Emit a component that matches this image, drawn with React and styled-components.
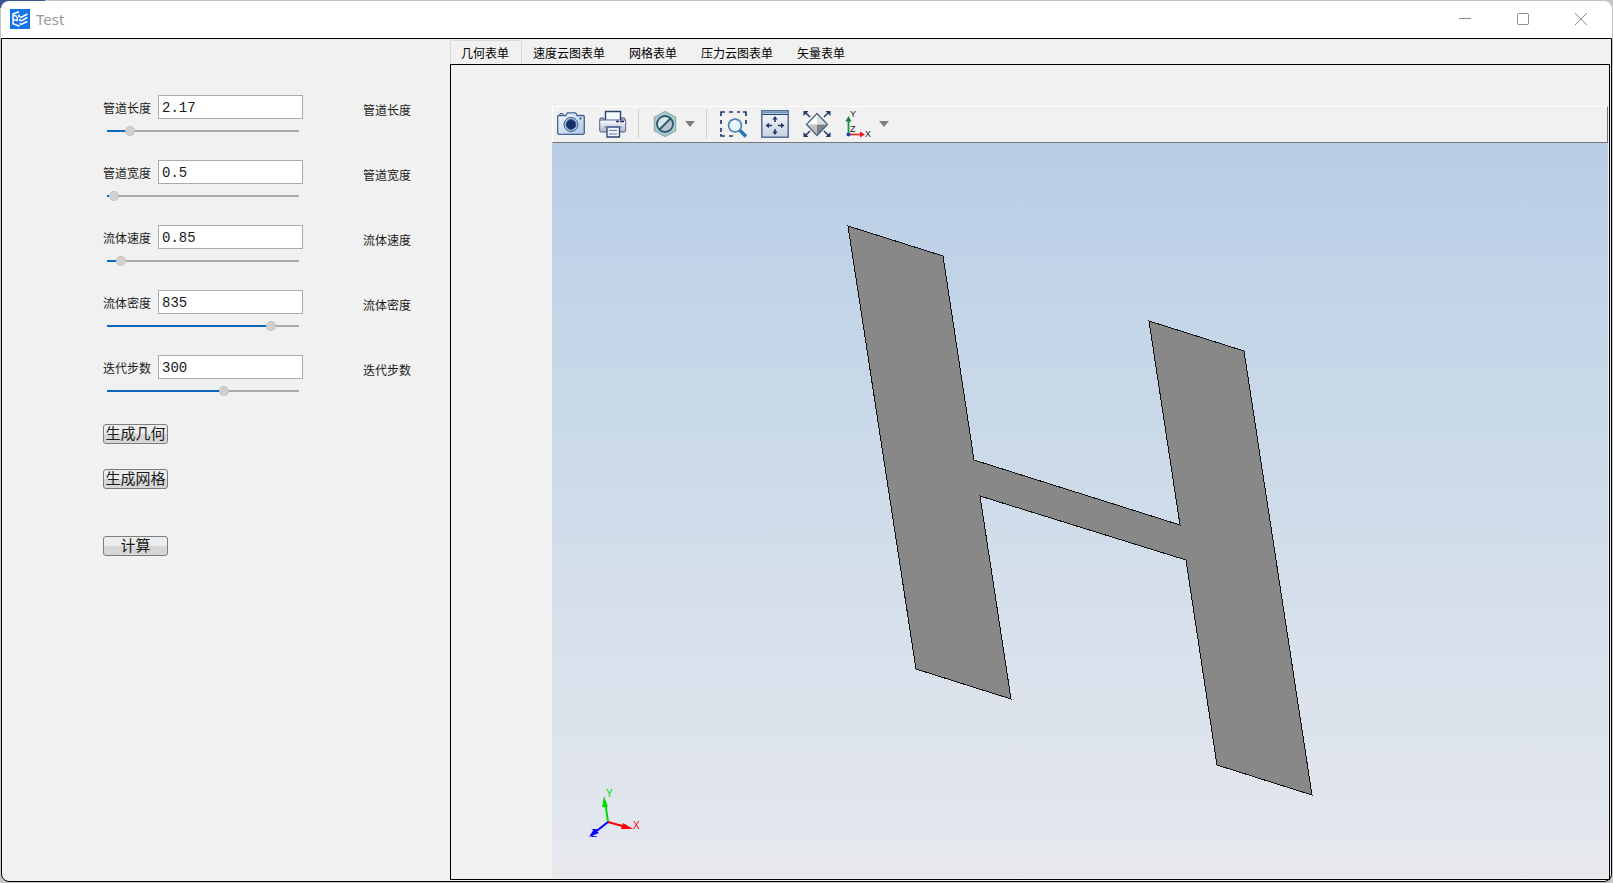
import { useState } from 'react';
import styled, { createGlobalStyle, css } from 'styled-components';

const GlobalStyle = createGlobalStyle`
  * {
    box-sizing: border-box;
  }

  body {
    margin: 0;
    background: linear-gradient(90deg, #3b5793 45px, #c4c4c4 45px) 0 0 / 100% 8px no-repeat, #c6c6c8;
    color: #1a1a1a;
    font-family: 'Liberation Sans', 'Noto Sans CJK SC', sans-serif;
    font-size: 12px;
  }

  button,
  input {
    margin: 0;
    color: inherit;
    font: inherit;
  }
`;

const Window = styled.div`
  display: flex;
  flex-direction: column;
  height: 100vh;
  padding: 1px;
`;

const TitleBar = styled.header`
  display: flex;
  align-items: center;
  height: 37px;
  padding: 0 2px 2px 9px;
  background: #fff;
  border-radius: 8px 8px 0 0;
`;

const Title = styled.h1`
  flex: 1;
  margin: 0 0 0 6px;
  color: #999;
  font-family: 'Noto Sans', sans-serif;
  font-size: 15px;
  font-weight: 400;
`;

const WindowButton = styled.button`
  display: flex;
  align-items: center;
  justify-content: center;
  width: 58px;
  height: 35px;
  padding: 0;
  background: none;
  border: 0;
`;

const Body = styled.div`
  display: flex;
  flex: 1;
  min-height: 0;
  background: #f1f1f1;
  border: 1px solid #000;
  border-radius: 0 0 8px 8px;
`;

const Sidebar = styled.form`
  flex: none;
  width: 448px;
  padding: 56px 0 0 101px;
`;

const Param = styled.div`
  display: flex;
  gap: 60px;
  height: 44px;
  margin-bottom: 21px;
`;

const Controls = styled.div`
  display: flex;
  flex-direction: column;
  gap: 4px;
  width: 200px;
`;

const Field = styled.label`
  display: flex;
  align-items: center;
  justify-content: space-between;
  white-space: nowrap;
`;

const ValueInput = styled.input`
  width: 145px;
  height: 24px;
  padding: 2px 3px 0;
  background: #fff;
  border: 1px solid #ababab;
  font-family: 'Liberation Mono', monospace;
  font-size: 14px;
`;

const track = css`
  height: 2px;
  background: linear-gradient(90deg, #0f67b8 var(--fill), #ababab var(--fill));
`;

const thumb = css`
  width: 10px;
  height: 10px;
  background: #d0d0d0;
  border: 1px dotted #b4b4b4;
  border-radius: 50%;
`;

const Slider = styled.input`
  appearance: none;
  height: 16px;
  margin: 0 4px;
  background: none;

  &::-webkit-slider-runnable-track {
    ${track}
  }

  &::-webkit-slider-thumb {
    appearance: none;
    margin-top: -4px;
    ${thumb}
  }

  &::-moz-range-track {
    ${track}
  }

  &::-moz-range-thumb {
    ${thumb}
  }
`;

const Note = styled.span`
  line-height: 33px;
`;

const Actions = styled.div`
  display: flex;
  flex-direction: column;
  align-items: flex-start;
  gap: 25px;
  padding-top: 4px;
`;

const ActionButton = styled.button`
  width: 65px;
  height: 20px;
  margin-top: ${(props) => (props.$apart ? '22px' : '0')};
  padding: 0;
  background: linear-gradient(#ededed 50%, #d6d6d6 50%);
  border: 1px solid #7c7c7c;
  border-radius: 3px;
  font-size: 15px;
  line-height: 18px;
  white-space: nowrap;
`;

const Main = styled.main`
  display: flex;
  flex: 1;
  flex-direction: column;
  min-width: 0;
  padding: 1px 1px 1px 0;
`;

const TabList = styled.div`
  display: flex;
  height: 24px;
`;

const Tab = styled.button`
  height: 25px;
  padding: 0 12px 0 10px;
  background: ${(props) => (props.$active ? '#f1f1f1' : 'none')};
  border: 1px solid ${(props) => (props.$active ? '#d9d9d9' : 'transparent')};
  color: #000;
  white-space: nowrap;
`;

const Panel = styled.section`
  display: flex;
  flex: 1;
  flex-direction: column;
  min-height: 0;
  padding: 41px 1px 1px 101px;
  border: 1px solid #000;
`;

const Toolbar = styled.div`
  display: flex;
  align-items: center;
  height: 37px;
  padding: 0 0 2px 4px;
  border: 1px solid;
  border-color: #fff #777 #777 #fff;
`;

const ToolGroup = styled.div`
  display: flex;
  gap: 14px;
`;

const ToolButton = styled.button`
  display: flex;
  align-items: center;
  gap: 6px;
  padding: 0;
  background: none;
  border: 0;
`;

const Separator = styled.div`
  width: 1px;
  height: 29px;
  margin: 0 12px 0 11px;
  background: #cfcfcf;
`;

const Arrow = styled.span`
  border: 5px solid transparent;
  border-top: 6px solid #808080;
  border-bottom: 0;
`;

const Canvas = styled.div`
  flex: 1;
  min-height: 0;
  background: linear-gradient(#b8cde6, #c3d5e8 22%, #cfdce9 50%, #d9e1ec 70%, #e2e6ed 92%, #e8e9ed);
`;

const Scene = styled.svg`
  display: block;
  width: 100%;
  height: 100%;
`;

const params = [
  { id: 'length', label: '管道长度', value: '2.17', position: 10 },
  { id: 'width', label: '管道宽度', value: '0.5', position: 1 },
  { id: 'speed', label: '流体速度', value: '0.85', position: 5 },
  { id: 'density', label: '流体密度', value: '835', position: 87.5 },
  { id: 'steps', label: '迭代步数', value: '300', position: 61.5 }
];

const tabs = ['几何表单', '速度云图表单', '网格表单', '压力云图表单', '矢量表单'];

const AppLogo = () => (
  <svg width="20" height="20" viewBox="0 0 20 20">
    <rect width="20" height="20" fill="#1473e6" />
    <g fill="none" stroke="#fff" strokeWidth="1.5">
      <path d="M2.5 5.2 9 2.8M3 5v9.8l6.500 2.400M3.2 6.200l4 1.200M3.5 10.5l3.600 1.100M7.300 8v4" />
      <path d="M9 5.500v2l2 1 6.500-3.500M9 10.500l2 1.300 6.500-3.300M9.500 14.500l1.700 1 6-3" />
    </g>
  </svg>
);

const Icon = ({ children }) => (
  <svg width="28" height="28" viewBox="0 0 28 28" fill="none">
    {children}
  </svg>
);

const CameraIcon = () => (
  <Icon>
    <defs>
      <linearGradient id="camera" x1="0" y1="0" x2="1" y2="1">
        <stop offset="0" stopColor="#f4f9ff" />
        <stop offset="1" stopColor="#a9c9ea" />
      </linearGradient>
    </defs>
    <path
      d="M2 5.5h7l1.3-2.7h8.4L20 5.5h6q1.3 0 1.3 1.3v16q0 1.5-1.3 1.5H2q-1.3 0-1.3-1.5v-16Q.7 5.5 2 5.5z"
      fill="url(#camera)"
      stroke="#46618c"
      strokeWidth="1.3"
    />
    <path d="M3 5V3.5h3V5" stroke="#46618c" />
    <circle cx="14" cy="14.5" r="7" fill="#b9cce2" stroke="#3c5a86" />
    <circle cx="14" cy="14.5" r="5" fill="#132f63" stroke="#3b6292" />
    <circle cx="23.5" cy="8.5" r="1" fill="#1d3768" />
  </Icon>
);

const PrinterIcon = () => (
  <Icon>
    <defs>
      <linearGradient id="printer" x1="0" y1="0" x2="0" y2="1">
        <stop offset="0" stopColor="#fff" />
        <stop offset="1" stopColor="#aab4cd" />
      </linearGradient>
    </defs>
    <rect x="1" y="8" width="4" height="5" rx="1" fill="#e4e8f0" stroke="#2b3f70" />
    <rect x="22" y="8" width="4" height="5" rx="1" fill="#e4e8f0" stroke="#2b3f70" />
    <path d="M6.5 1.5h15V11h-15z" fill="#f5f8fd" stroke="#2b3f70" strokeWidth="1.4" />
    <rect x=".7" y="10" width="26" height="12" rx="1.5" fill="url(#printer)" stroke="#52638c" />
    <path d="M17 11.5h3m1 0h4" stroke="#1d2f60" strokeWidth="1.4" />
    <path d="M8 17h12.5v10H8z" fill="#eef3fb" stroke="#2b3f70" strokeWidth="1.3" />
    <path d="M5 17h18M10 20.5h8m-8 3.5h8" stroke="#6c80a8" strokeWidth="1.2" />
  </Icon>
);

const SectionIcon = () => (
  <Icon>
    <path d="M14 1.5 24.5 7.5v13L14 26.5 3.5 20.5v-13z" fill="#b5cdd0" stroke="#8eacb0" strokeWidth="1.4" />
    <circle cx="14" cy="14" r="8" fill="#dce5ea" />
    <path d="M20 8.5A8 8 0 0 1 8.5 20z" fill="#bcc3cc" />
    <circle cx="14" cy="14" r="8" stroke="#205b70" strokeWidth="1.8" />
    <path d="M8.5 19.5l11-11" stroke="#205b70" strokeWidth="1.8" />
  </Icon>
);

const ZoomAreaIcon = () => (
  <Icon>
    <path
      d="M2 6V2h4m4 0h4m4 0h3m3 0h3v4m0 4v4M2 10v4m0 4v4m0 2v2h4m4 0h4"
      stroke="#243b6c"
      strokeWidth="1.7"
    />
    <path d="M20.5 20l6.5 6.5" stroke="#2874b6" strokeWidth="3.6" />
    <circle cx="16" cy="15.5" r="6.4" fill="#e9f5fc" stroke="#4d86ae" strokeWidth="1.7" />
    <path d="M12 14.5q1.3-3 4.5-3" stroke="#fff" strokeWidth="1.6" />
  </Icon>
);

const FitWindowIcon = () => (
  <Icon>
    <defs>
      <linearGradient id="fit" x1="0" y1="0" x2="0" y2="1">
        <stop offset="0" stopColor="#f7f9fd" />
        <stop offset="1" stopColor="#c8d1e2" />
      </linearGradient>
    </defs>
    <rect x=".8" y=".8" width="26.4" height="26.4" fill="url(#fit)" stroke="#4b628c" strokeWidth="1.4" />
    <path d="M1.5 2.5h25" stroke="#6f96c2" strokeWidth="2" />
    <path d="M1 4.5h26" stroke="#2e4877" />
    <path d="M14 8v4M14 19v4M7 15.5h4m6 0h4" stroke="#203967" strokeWidth="1.6" />
    <path d="M14 6l2.7 3.500h-5.400zM14 25l2.700-3.500h-5.400zM4.500 15.500l3.500-2.700v5.400zM23.500 15.500l-3.500-2.700v5.400z" fill="#203967" />
  </Icon>
);

const FitAllIcon = () => (
  <Icon>
    <path d="M14 3.5 3.5 14.5H14z" fill="#fff" />
    <path d="M14 3.5 24.5 14.5H14z" fill="#dcdfe0" />
    <path d="M3.5 14.5H14v11z" fill="#bec2c5" />
    <path d="M24.5 14.5H14v11z" fill="#7d8387" />
    <path d="M14 3.5 24.5 14.5 14 25.5 3.5 14.5z" stroke="#4d6485" strokeWidth="1.3" />
    <path d="M2 2l5 5M26 2l-5 5M2 26l5-5m19 5l-5-5" stroke="#203967" strokeWidth="1.5" />
    <path d="M.5 1h5L.5 6zM27.5 1h-5l5 5zM.5 27h5l-5-5zM27.5 27h-5l5-5z" fill="#203967" />
  </Icon>
);

const AxesIcon = () => (
  <Icon>
    <path d="M3.5 24.5V10" stroke="#249044" strokeWidth="1.8" />
    <path d="M3.5 6l3 5.5h-6z" fill="#168238" />
    <path d="M4 24.5h12" stroke="#e33a2c" strokeWidth="1.8" />
    <path d="M20 24.5l-5-3v6z" fill="#e3211a" />
    <circle cx="3.5" cy="24.5" r="2" fill="#2144ae" />
    <g fill="#222" fontFamily="Liberation Sans, sans-serif" fontSize="9">
      <text x="5" y="7">Y</text>
      <text x="5" y="22">Z</text>
      <text x="20" y="27">X</text>
    </g>
  </Icon>
);

function ParamRow({ param }) {
  const [value, setValue] = useState(param.value);
  const [position, setPosition] = useState(param.position);

  return (
    <Param>
      <Controls>
        <Field>
          {param.label}
          <ValueInput name={param.id} value={value} onChange={(e) => setValue(e.target.value)} />
        </Field>
        <Slider
          type="range"
          step="any"
          aria-label={param.label}
          value={position}
          onChange={(e) => setPosition(e.target.value)}
          style={{ '--fill': `${position}%` }}
        />
      </Controls>
      <Note>{param.label}</Note>
    </Param>
  );
}

function GeometryView() {
  return (
    <Canvas>
      <Scene viewBox="0 0 1056 735">
        <path
          d="M296 83 391 113 422 317 628 382 597 178 692 208 760 652 665 622 634 417 428 353 459 556 364 526z"
          fill="#888"
          stroke="#111"
          shapeRendering="crispEdges"
        />
        {/* orientation triad */}
        <g fill="none" strokeWidth="2">
          <path d="M56 679 53 658" stroke="#0d0" />
          <path d="M56 679 74 684" stroke="#f00" />
          <path d="M56 679 42 690" stroke="#00f" />
        </g>
        <path d="M52 653 56 664 50 664z" fill="#0d0" />
        <path d="M81 686 69 686 71 680z" fill="#f00" />
        <path d="M37 694 42 686 47 690z" fill="#00f" />
        <g fontFamily="Liberation Sans, sans-serif" fontSize="10">
          <text x="54" y="654" fill="#0d0">Y</text>
          <text x="81" y="686" fill="#f00">X</text>
          <text x="39" y="694" fill="#00f">Z</text>
        </g>
      </Scene>
    </Canvas>
  );
}

export default function App() {
  const [activeTab, setActiveTab] = useState(tabs[0]);

  return (
    <Window>
      <GlobalStyle />
      <TitleBar>
        <AppLogo />
        <Title>Test</Title>
        <WindowButton aria-label="最小化">
          <svg width="12" height="12" stroke="#8c8c8c">
            <path d="M0 5.5h12" />
          </svg>
        </WindowButton>
        <WindowButton aria-label="最大化">
          <svg width="12" height="12" fill="none" stroke="#8c8c8c">
            <rect x=".5" y=".5" width="11" height="11" rx="1" />
          </svg>
        </WindowButton>
        <WindowButton aria-label="关闭">
          <svg width="12" height="12" stroke="#8c8c8c">
            <path d="M0 0l12 12M12 0L0 12" />
          </svg>
        </WindowButton>
      </TitleBar>
      <Body>
        <Sidebar onSubmit={(e) => e.preventDefault()}>
          {params.map((param) => (
            <ParamRow key={param.id} param={param} />
          ))}
          <Actions>
            <ActionButton type="button">生成几何</ActionButton>
            <ActionButton type="button">生成网格</ActionButton>
            <ActionButton $apart>计算</ActionButton>
          </Actions>
        </Sidebar>
        <Main>
          <TabList role="tablist">
            {tabs.map((tab) => (
              <Tab
                key={tab}
                role="tab"
                aria-selected={tab === activeTab}
                $active={tab === activeTab}
                onClick={() => setActiveTab(tab)}
              >
                {tab}
              </Tab>
            ))}
          </TabList>
          <Panel role="tabpanel" aria-label={activeTab}>
            <Toolbar role="toolbar">
              <ToolGroup>
                <ToolButton aria-label="截图">
                  <CameraIcon />
                </ToolButton>
                <ToolButton aria-label="打印">
                  <PrinterIcon />
                </ToolButton>
              </ToolGroup>
              <Separator />
              <ToolButton aria-label="剖切">
                <SectionIcon />
                <Arrow />
              </ToolButton>
              <Separator />
              <ToolGroup>
                <ToolButton aria-label="框选缩放">
                  <ZoomAreaIcon />
                </ToolButton>
                <ToolButton aria-label="适应窗口">
                  <FitWindowIcon />
                </ToolButton>
                <ToolButton aria-label="显示全部">
                  <FitAllIcon />
                </ToolButton>
                <ToolButton aria-label="视图方向">
                  <AxesIcon />
                  <Arrow />
                </ToolButton>
              </ToolGroup>
            </Toolbar>
            <GeometryView />
          </Panel>
        </Main>
      </Body>
    </Window>
  );
}
